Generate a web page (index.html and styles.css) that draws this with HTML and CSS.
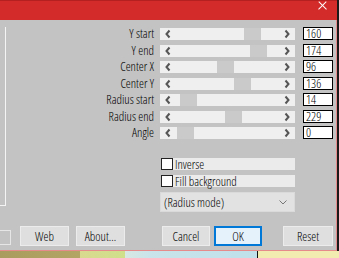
FILE: index.html
```html
<!DOCTYPE html>
<html>
<head>
<meta charset="utf-8">
<link rel="stylesheet" href="styles.css">
</head>
<body>
<div class="screen">
  <div class="window">
    <div class="titlebar">
      <div class="close" title="Close"><i class="bar b1"></i><i class="bar b2"></i></div>
    </div>
    <div class="client">
      <div class="main">
        <div class="leftpane"></div>
        <div class="panel">
          <div class="grid">
            <div class="lbl">Y start</div>
            <div class="slider"><svg class="arrow" viewBox="0 0 12 12"><polyline points="9.5,2.5 6.5,6 9.5,9.5" /></svg><div class="lane"><div class="thumb" style="margin-left:72px"></div></div><svg class="arrow" viewBox="0 0 12 12"><polyline points="2.5,2.5 5.5,6 2.5,9.5" /></svg></div>
            <div class="num">160</div>

            <div class="lbl">Y end</div>
            <div class="slider"><svg class="arrow" viewBox="0 0 12 12"><polyline points="9.5,2.5 6.5,6 9.5,9.5" /></svg><div class="lane"><div class="thumb" style="margin-left:78px"></div></div><svg class="arrow" viewBox="0 0 12 12"><polyline points="2.5,2.5 5.5,6 2.5,9.5" /></svg></div>
            <div class="num">174</div>

            <div class="lbl">Center X</div>
            <div class="slider"><svg class="arrow" viewBox="0 0 12 12"><polyline points="9.5,2.5 6.5,6 9.5,9.5" /></svg><div class="lane"><div class="thumb" style="margin-left:45px"></div></div><svg class="arrow" viewBox="0 0 12 12"><polyline points="2.5,2.5 5.5,6 2.5,9.5" /></svg></div>
            <div class="num">96</div>

            <div class="lbl">Center Y</div>
            <div class="slider"><svg class="arrow" viewBox="0 0 12 12"><polyline points="9.5,2.5 6.5,6 9.5,9.5" /></svg><div class="lane"><div class="thumb" style="margin-left:62px"></div></div><svg class="arrow" viewBox="0 0 12 12"><polyline points="2.5,2.5 5.5,6 2.5,9.5" /></svg></div>
            <div class="num">136</div>

            <div class="lbl">Radius start</div>
            <div class="slider"><svg class="arrow" viewBox="0 0 12 12"><polyline points="9.5,2.5 6.5,6 9.5,9.5" /></svg><div class="lane"><div class="thumb" style="margin-left:8px"></div></div><svg class="arrow" viewBox="0 0 12 12"><polyline points="2.5,2.5 5.5,6 2.5,9.5" /></svg></div>
            <div class="num">14</div>

            <div class="lbl">Radius end</div>
            <div class="slider"><svg class="arrow" viewBox="0 0 12 12"><polyline points="9.5,2.5 6.5,6 9.5,9.5" /></svg><div class="lane"><div class="thumb" style="margin-left:53px"></div></div><svg class="arrow" viewBox="0 0 12 12"><polyline points="2.5,2.5 5.5,6 2.5,9.5" /></svg></div>
            <div class="num">229</div>

            <div class="lbl">Angle</div>
            <div class="slider"><svg class="arrow" viewBox="0 0 12 12"><polyline points="9.5,2.5 6.5,6 9.5,9.5" /></svg><div class="lane"><div class="thumb" style="margin-left:5px"></div></div><svg class="arrow" viewBox="0 0 12 12"><polyline points="2.5,2.5 5.5,6 2.5,9.5" /></svg></div>
            <div class="num">0</div>
          </div>

          <div class="checks">
            <div class="check"><span class="box"></span><span class="ctext">Inverse</span></div>
            <div class="check"><span class="box"></span><span class="ctext">Fill background</span></div>
          </div>

          <div class="select">
            <span>(Radius mode)</span>
            <svg class="chev" width="8" height="5" viewBox="0 0 8 5"><polyline points="0.5,0.5 4,4 7.5,0.5" /></svg>
          </div>
        </div>
      </div>
      <div class="buttons">
        <div class="stub"></div>
        <button class="btn web">Web</button>
        <button class="btn about">About...</button>
        <button class="btn cancel">Cancel</button>
        <button class="btn ok">OK</button>
        <button class="btn reset">Reset</button>
      </div>
    </div>
  </div>
  <div class="edge"></div>
</div>
<div class="strip"></div>
</body>
</html>
```

FILE: styles.css
```css
* { box-sizing: border-box; }
html, body { margin: 0; padding: 0; }
body {
  width: 339px;
  height: 258px;
  overflow: hidden;
  background: #000;
  font-family: "Open Sans", "Liberation Sans", Arial, sans-serif;
  font-stretch: 75%;
  font-weight: 350;
  font-size: 12.5px;
  color: #000;
}
.screen { display: flex; height: 251px; }
.window { width: 337px; flex: none; display: flex; flex-direction: column; }
.edge { width: 2px; flex: none; background: #1a1a1a; }
.titlebar {
  height: 20px;
  flex: none;
  background: #d32a2a;
  border-top: 1px solid #b42020;
  display: flex;
  justify-content: flex-end;
  align-items: flex-start;
  padding-right: 11px;
}
.close {
  width: 9px;
  height: 9px;
  flex: none;
  display: grid;
  place-items: center;
}
.bar {
  grid-area: 1 / 1;
  display: block;
  width: 11px;
  height: 1.3px;
  background: #ffffff;
}
.b1 { transform: rotate(45deg); }
.b2 { transform: rotate(-45deg); }
.client {
  flex: 1;
  background: #c3c3c3;
  border-right: 1px solid #e58b8b;
  border-bottom: 1px solid #e58b8b;
  display: flex;
  flex-direction: column;
}
.main { display: flex; height: 206px; }
.leftpane {
  width: 6px;
  height: 179px;
  margin-top: 7px;
  border-right: 1px solid #f4f4f4;
  border-bottom: 1px solid #f4f4f4;
  flex: none;
}
.panel { flex: 1; padding-top: 7px; }
.grid {
  display: grid;
  grid-template-columns: 148px 135px 32px;
  grid-auto-rows: 13px;
  row-gap: 3.5px;
  column-gap: 6px;
}
.lbl { text-align: right; line-height: 14px; white-space: nowrap; }
.slider {
  height: 12px;
  align-self: end;
  background: #efefef;
  display: flex;
}
.arrow { width: 12px; height: 12px; flex: none; display: block; }
.arrow polyline { fill: none; stroke: #555; stroke-width: 2; }
.lane { flex: 1; height: 12px; display: flex; }
.thumb { width: 17px; height: 12px; background: #cacaca; flex: none; }
.num {
  justify-self: end;
  width: 30px;
  height: 13px;
  background: #fff;
  border: 1px solid #000;
  line-height: 12px;
  padding-left: 2px;
}
.checks {
  margin-left: 155px;
  margin-top: 19px;
  width: 134px;
  display: flex;
  flex-direction: column;
  gap: 5px;
}
.check { display: flex; height: 12px; }
.box { width: 12px; height: 12px; background: #fff; border: 1px solid #222; flex: none; }
.ctext { flex: 1; background: #ebebeb; line-height: 13px; padding-left: 2px; white-space: nowrap; }
.select {
  margin-left: 154px;
  margin-top: 5px;
  width: 135px;
  height: 20px;
  background: #e2e2e2;
  border: 1px solid #dadada;
  display: flex;
  align-items: center;
  justify-content: space-between;
  padding: 0 7px 0 3px;
}
.chev polyline { fill: none; stroke: #777; stroke-width: 1; }
.buttons { display: flex; height: 20px; }
.stub {
  width: 11px;
  height: 15px;
  margin-top: 4px;
  border: 1px solid #e6e6e6;
  border-left: none;
  flex: none;
}
.btn {
  font: inherit;
  color: #000;
  padding: 0;
  margin: 0;
  height: 20px;
  width: 49px;
  background: #dfdfdf;
  border: 1px solid #ececec;
  display: flex;
  align-items: center;
  justify-content: center;
  flex: none;
}
.web { margin-left: 9px; }
.about { margin-left: 7px; }
.cancel { margin-left: 37px; width: 48px; }
.ok { margin-left: 4px; width: 48px; border: 2px solid #0078d7; background: #e5f1fb; }
.reset { margin-left: 21px; width: 50px; }
.strip {
  height: 7px;
  background: linear-gradient(90deg, #a99c5e 0, #b3a564 80px, #d9d98f 80px, #cfe08a 125px, #d8e8e2 125px, #c9e4ea 150px, #bfe0ea 257px, #111 257px, #111 258px, #f2ecb0 258px);
}
```
